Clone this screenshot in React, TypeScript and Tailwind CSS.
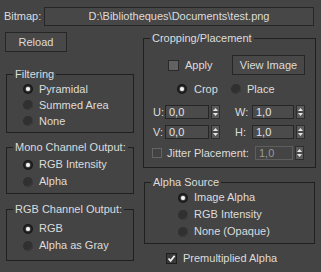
import React from "react";

const Radio = ({ on }: { on?: boolean }) => (
  <span
    className={`flex h-[10px] w-[10px] shrink-0 items-center justify-center rounded-full ${
      on ? "bg-[#181818]" : "bg-[#303030] shadow-[inset_-1px_-1px_0_#3c3c3c]"
    }`}
  >
    {on && <span className="h-[4px] w-[4px] rounded-full bg-[#f4f4f4] shadow-[0_0_2px_#ffffff]" />}
  </span>
);

const RadioRow = ({
  label,
  on,
  h,
  indent,
}: {
  label: string;
  on?: boolean;
  h: string;
  indent: string;
}) => (
  <div className={`flex items-center ${h}`}>
    <span className={indent}>
      <Radio on={on} />
    </span>
    <span className="ml-[6px]">{label}</span>
  </div>
);

const Group = ({
  title,
  className,
  children,
}: {
  title: string;
  className: string;
  children: React.ReactNode;
}) => (
  <fieldset className={`border border-[#202020] ${className}`}>
    <legend className="ml-[6px] px-[2px] leading-[14px]">{title}</legend>
    {children}
  </fieldset>
);

const Spinner = () => (
  <div className="ml-[2px] flex h-[14px] w-[9px] shrink-0 flex-col items-center justify-center border border-[#2e2e2e] bg-[#5a5a5a]">
    <svg width="7" height="12" viewBox="0 0 7 12">
      <path d="M3.5 2 L6 5 L1 5 Z" fill="#e6e6e6" />
      <line x1="0" y1="6" x2="7" y2="6" stroke="#3a3a3a" strokeWidth="1" />
      <path d="M1 7 L6 7 L3.5 10 Z" fill="#e6e6e6" />
    </svg>
  </div>
);

const Field = ({ value, w, disabled }: { value: string; w: string; disabled?: boolean }) => (
  <div
    className={`flex h-[14px] shrink-0 items-center pl-[3px] leading-[12px] ${w} ${
      disabled
        ? "border border-[#5e5e5e] bg-[#444444] text-[#9a9a9a]"
        : "border border-[#262626] bg-[#4b4b4b] text-[#e4e4e4]"
    }`}
  >
    {value}
  </div>
);

const App: React.FC = () => {
  return (
    <div className="h-[272px] w-[321px] overflow-hidden bg-[#444444] font-['Liberation_Sans',Arial,sans-serif] text-[11px] text-[#dcdcdc]">
      {/* bitmap path */}
      <div className="ml-[4px] mt-[7px] flex h-[19px] items-center">
        <span className="w-[40px]">Bitmap:</span>
        <div className="flex h-[19px] w-[270px] items-center justify-center border border-[#262626] bg-[#474747]">
          {"D:\\Bibliotheques\\Documents\\test.png"}
        </div>
      </div>

      <div className="mt-[5px] flex">
        {/* left column */}
        <div className="ml-[5px] flex w-[129px] flex-col">
          <button className="mt-px flex h-[20px] w-[62px] items-center justify-center border border-[#262626] bg-[#484848]">
            Reload
          </button>

          <Group title="Filtering" className="ml-px mt-[15px] w-[128px] pb-[3px]">
            <RadioRow label="Pyramidal" on h="h-[16px]" indent="ml-[16px]" />
            <RadioRow label="Summed Area" h="h-[16px]" indent="ml-[16px]" />
            <RadioRow label="None" h="h-[16px]" indent="ml-[16px]" />
          </Group>

          <Group title="Mono Channel Output:" className="ml-px mt-[7px] w-[128px] pb-[3px] pt-[2px]">
            <RadioRow label="RGB Intensity" on h="h-[17px]" indent="ml-[16px]" />
            <RadioRow label="Alpha" h="h-[17px]" indent="ml-[16px]" />
          </Group>

          <Group title="RGB Channel Output:" className="ml-px mt-[8px] w-[128px] pb-[6px] pt-[4px]">
            <RadioRow label="RGB" on h="h-[17px]" indent="ml-[16px]" />
            <RadioRow label="Alpha as Gray" h="h-[17px]" indent="ml-[16px]" />
          </Group>
        </div>

        {/* right column */}
        <div className="ml-[9px] flex w-[173px] flex-col">
          <Group title="Cropping/Placement" className="w-[173px] pb-[7px]">
            <div className="mt-[10px] flex h-[20px] items-center">
              <span className="ml-[24px] h-[11px] w-[11px] shrink-0 border border-[#2a2a2a] bg-[#626262]" />
              <span className="ml-[6px] w-[47px]">Apply</span>
              <button className="flex h-[20px] w-[73px] items-center justify-center border border-[#262626] bg-[#484848]">
                View Image
              </button>
            </div>

            <div className="mt-[6px] flex h-[16px] items-center">
              <span className="ml-[33px]">
                <Radio on />
              </span>
              <span className="ml-[7px] w-[37px]">Crop</span>
              <Radio />
              <span className="ml-[6px]">Place</span>
            </div>

            <div className="mt-[8px] flex h-[14px] items-center">
              <span className="ml-[9px] w-[12px]">U:</span>
              <Field value="0,0" w="w-[44px]" />
              <Spinner />
              <span className="ml-[15px] w-[17px]">W:</span>
              <Field value="1,0" w="w-[42px]" />
              <Spinner />
            </div>

            <div className="mt-[6px] flex h-[14px] items-center">
              <span className="ml-[9px] w-[12px]">V:</span>
              <Field value="0,0" w="w-[44px]" />
              <Spinner />
              <span className="ml-[15px] w-[17px]">H:</span>
              <Field value="1,0" w="w-[42px]" />
              <Spinner />
            </div>

            <div className="mt-[7px] flex h-[14px] items-center">
              <span className="ml-[8px] h-[10px] w-[10px] shrink-0 border border-[#646464] bg-[#424242]" />
              <span className="ml-[5px] w-[88px]">Jitter Placement:</span>
              <Field value="1,0" w="w-[38px]" disabled />
              <Spinner />
            </div>
          </Group>

          <Group title="Alpha Source" className="ml-px mt-[7px] w-[171px] pb-[3px]">
            <RadioRow label="Image Alpha" on h="h-[17px]" indent="ml-[33px]" />
            <RadioRow label="RGB Intensity" h="h-[17px]" indent="ml-[33px]" />
            <RadioRow label="None (Opaque)" h="h-[17px]" indent="ml-[33px]" />
          </Group>

          <div className="mt-[9px] flex h-[11px] items-center">
            <span className="ml-[23px] flex h-[11px] w-[11px] shrink-0 items-center justify-center border border-[#1e1e1e] bg-[#3a3a3a]">
              <svg width="9" height="9" viewBox="0 0 9 9">
                <path d="M1.5 4.5 L3.6 6.8 L7.6 1.8" fill="none" stroke="#f2f2f2" strokeWidth="1.8" />
              </svg>
            </span>
            <span className="ml-[6px]">Premultiplied Alpha</span>
          </div>
        </div>
      </div>
    </div>
  );
};

export default App;
